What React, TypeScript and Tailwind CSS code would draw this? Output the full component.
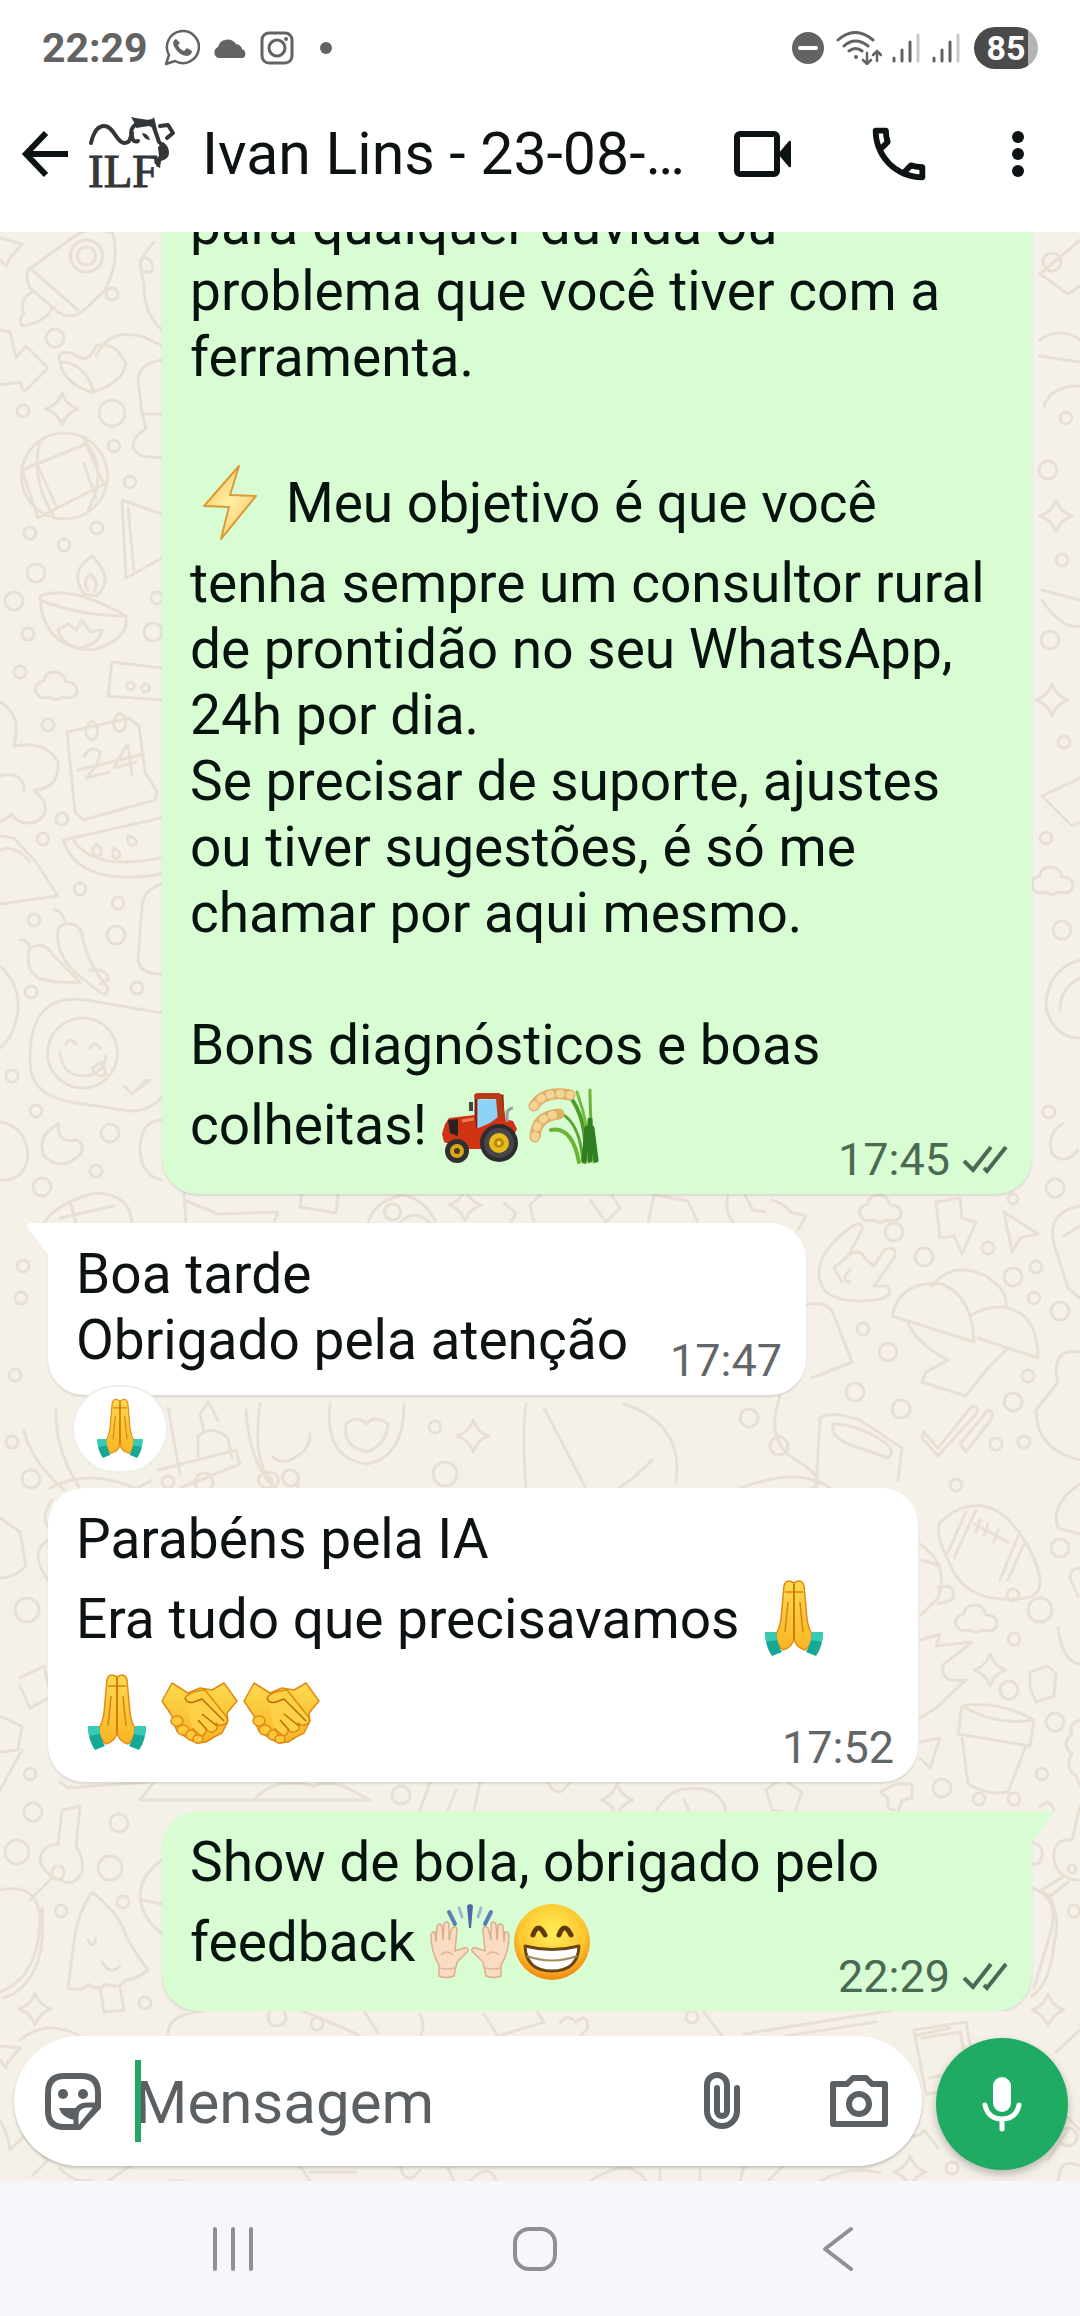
import React from 'react';
import { MdOutlinePhone } from 'react-icons/md';

type EmojiName = 'bolt' | 'tractor' | 'rice' | 'pray' | 'shake' | 'raise' | 'grin';

interface Message {
  id: number;
  mine: boolean;
  tail: boolean;
  time: string;
  // an emoji is written as :name: inside the text
  paragraphs: string[];
  reaction?: EmojiName;
}

const MESSAGES: Message[] = [
  {
    id: 1,
    mine: true,
    tail: false,
    time: '17:45',
    paragraphs: [
      'para qualquer dúvida ou problema que você tiver com a ferramenta.',
      '',
      ':bolt: Meu objetivo é que você tenha sempre um consultor rural de prontidão no seu WhatsApp, 24h por dia.',
      'Se precisar de suporte, ajustes ou tiver sugestões, é só me chamar por aqui mesmo.',
      '',
      'Bons diagnósticos e boas colheitas! :tractor::rice:',
    ],
  },
  {
    id: 2,
    mine: false,
    tail: true,
    time: '17:47',
    paragraphs: ['Boa tarde', 'Obrigado pela atenção'],
    reaction: 'pray',
  },
  {
    id: 3,
    mine: false,
    tail: false,
    time: '17:52',
    paragraphs: ['Parabéns pela IA', 'Era tudo que precisavamos :pray::pray::shake::shake:'],
  },
  {
    id: 4,
    mine: true,
    tail: true,
    time: '22:29',
    paragraphs: ['Show de bola, obrigado pelo feedback :raise::grin:'],
  },
];

/* ---------- emoji ---------- */

const PrayHalf = () => (
  <g>
    <path d="M41 11q-8-5-10 3l-3 33c-1 8-3 12-6 17q2 10 8 14 10-3 11-12z" fill="url(#skin)" stroke="#e08a12" strokeWidth="1.5" />
    <path d="M32 20h9M35 30c-1 12-2 20-3 30" stroke="#d9820f" strokeWidth="1.5" fill="none" />
    <path d="M12 60h11q1 12 6 20l-10 4q-7-10-7-24z" fill="#16a895" />
    <path d="M12 60h11l1 8-11 2z" fill="#35cbb5" />
  </g>
);

const EmojiArt: Record<EmojiName, React.ReactNode> = {
  bolt: (
    <path d="M49 10L14 50l25 1-8 32 35-43-26-1z" fill="url(#boltFill)" stroke="#dd9a33" strokeWidth="2" strokeLinejoin="round" />
  ),
  tractor: (
    <g>
      <path d="M36 20l26-2 2 40H36z" fill="#d8f0ff" stroke="#7a2412" strokeWidth="3" />
      <path d="M38 22l20-1v29l-20 8z" fill="#8fd2f7" />
      <path d="M34 17q1-2 4-2h20q3 0 4 3l4 26-8-2-2-21H35z" fill="#b93a17" />
      <path d="M5 46l4-6 26-3 1 14 14-6 8-6 15 4 4 8-4 8-30 12H22L4 64l-2-8z" fill="#cf3314" />
      <path d="M8 42l10-1v17l-8-3z" fill="#2b2320" />
      <path d="M22 43l12-2" stroke="#f07a4f" strokeWidth="3" />
      <path d="M67 44V36q0-5 6-6" stroke="#9aa0a4" strokeWidth="3" fill="none" />
      <path d="M31 24v9" stroke="#444" strokeWidth="4" />
      <circle cx="59" cy="65" r="19" fill="#2d2d30" />
      <circle cx="59" cy="65" r="15" fill="#45454a" />
      <circle cx="59" cy="65" r="10" fill="#e8bb1c" />
      <circle cx="59" cy="65" r="5" fill="#b98a0c" />
      <circle cx="59" cy="65" r="2" fill="#f6dc62" />
      <circle cx="17" cy="73" r="12" fill="#303033" />
      <circle cx="17" cy="73" r="7" fill="#d9a81c" />
      <circle cx="17" cy="73" r="3" fill="#4a3a10" />
    </g>
  ),
  rice: (
    <g fill="none" strokeLinecap="round">
      <path d="M72 84Q68 40 68 12" stroke="#6cb335" strokeWidth="3" />
      <path d="M63 84Q66 40 46 16" stroke="#4f9c2c" strokeWidth="4" />
      <path d="M67 84Q68 50 55 14" stroke="#79bb3c" strokeWidth="3" />
      <path d="M61 84Q58 46 40 36" stroke="#5aa630" strokeWidth="3" />
      <path d="M57 84Q50 48 29 52" stroke="#6cb335" strokeWidth="4" />
      <path d="M62 82L65 50M68 82L68 42M74 82L70 50" stroke="#2f7f22" strokeWidth="5" />
      <path d="M12 28Q22 12 48 17" stroke="#e0b067" strokeWidth="11" />
      <path d="M12 28Q22 12 48 17" stroke="#f4d496" strokeWidth="8" strokeDasharray="1 9" />
      <path d="M13 59Q14 38 37 36" stroke="#e0b067" strokeWidth="11" />
      <path d="M13 59Q14 38 37 36" stroke="#f4d496" strokeWidth="8" strokeDasharray="1 9" />
    </g>
  ),
  pray: (
    <g>
      <PrayHalf />
      <g transform="translate(82 0) scale(-1 1)">
        <PrayHalf />
      </g>
      <path d="M41 12v55" stroke="#c9750b" strokeWidth="1.5" />
    </g>
  ),
  shake: (
    <g stroke="#e08a12" strokeWidth="1.5" strokeLinejoin="round">
      <path d="M14 17l16 10 12-5 12 2 12-7 13 18-10 12 1 8-3 6-3 6-8 4-8 5-9 1-10-5-10-7-4-9-1-6-10-15z" fill="url(#skin)" />
      <path d="M27 32q3-5 12-7l8-1 20 25q5 6 0 9t-9-1q3 5-1 8t-9-1q0 5-5 6l-9-8" fill="#fdd045" />
      <path d="M27 32q2 6 9 4l8-3 22 22M44 48l15 12M40 54l9 10" fill="none" stroke="#b96a0a" />
      <g fill="#fdc93c">
        <ellipse cx="19" cy="55" rx="6" ry="5" />
        <ellipse cx="25" cy="64" rx="6" ry="5" />
        <ellipse cx="33" cy="69" rx="5" ry="5" />
        <ellipse cx="40" cy="73" rx="5" ry="4" />
      </g>
    </g>
  ),
  raise: (
    <g>
      {[0, 1].map((side) => (
        <g key={side} transform={side ? 'translate(82 0) scale(-1 1)' : undefined}>
          <path
            d="M10 81V70C5 62 2 52 2 40q1-4 4-3l1 10 1-16q3-4 5 0l1 14 1-16q3-4 5 0l0 16 3-12q4-3 5 1l-2 22 9-3q5-1 4 3L28 67l-3 14q-8 3-15 0z"
            fill="#f9dcc3"
            stroke="#dcae8e"
            strokeWidth="1.5"
          />
          <path d="M10 73q8 2 16 0M12 60q6-6 12 0" stroke="#e3b595" strokeWidth="1.5" fill="none" />
          <path d="M20 17l6 12" stroke="#5c7fb8" strokeWidth="4" strokeLinecap="round" />
          <path d="M30 13l3 9" stroke="#9db7d2" strokeWidth="3" strokeLinecap="round" />
        </g>
      ))}
      <path d="M38 11q3-4 6 0l-2 22h-2z" fill="#4a69a8" />
    </g>
  ),
  grin: (
    <g>
      <circle cx="41" cy="47" r="38" fill="url(#face)" />
      <path d="M22 40q5-14 12 0M48 40q5-14 12 0" fill="none" stroke="#5d3a0c" strokeWidth="5" strokeLinecap="round" />
      <path d="M14 51q27 7 54 0-1 25-27 25-26 0-27-25z" fill="#fff" stroke="#6b4512" strokeWidth="3" strokeLinejoin="round" />
      <path d="M16 61q25 9 50 0" stroke="#a88a5c" strokeWidth="2" fill="none" />
    </g>
  ),
};

const EMOJI_LABEL: Record<EmojiName, string> = {
  bolt: '⚡',
  tractor: '🚜',
  rice: '🌾',
  pray: '🙏',
  shake: '🤝',
  raise: '🙌🏻',
  grin: '😁',
};

const Emoji = ({ name, className }: { name: EmojiName; className: string }) => (
  <svg viewBox="0 0 82 94" role="img" aria-label={EMOJI_LABEL[name]} className={className}>
    {EmojiArt[name]}
  </svg>
);

const EmojiDefs = () => (
  <svg width="0" height="0" className="absolute" aria-hidden="true">
    <defs>
      <linearGradient id="skin" x1="0" y1="0" x2="0" y2="1">
        <stop offset="0" stopColor="#ffd94f" />
        <stop offset="1" stopColor="#f9b524" />
      </linearGradient>
      <linearGradient id="boltFill" x1="0" y1="0" x2="1" y2="1">
        <stop offset="0" stopColor="#f9b74c" />
        <stop offset=".5" stopColor="#fff0a6" />
        <stop offset="1" stopColor="#f9b74c" />
      </linearGradient>
      <radialGradient id="face" cx=".5" cy=".38" r=".62">
        <stop offset="0" stopColor="#ffee58" />
        <stop offset=".7" stopColor="#fdc62f" />
        <stop offset="1" stopColor="#f0860f" />
      </radialGradient>
    </defs>
  </svg>
);

/* ---------- wallpaper ---------- */

const DOTS = [
  [112, 294, 6], [55, 338, 9], [23, 411, 6], [112, 413, 13], [114, 446, 6], [130, 482, 6], [30, 533, 6], [97, 528, 6],
  [64, 545, 6], [36, 573, 9], [14, 601, 9], [157, 598, 6], [28, 634, 6], [153, 632, 9], [20, 672, 6], [48, 725, 6],
  [62, 819, 6], [43, 839, 6], [80, 889, 6], [118, 903, 6], [34, 920, 6], [116, 935, 9], [31, 992, 6], [137, 988, 6],
  [12, 1076, 6], [36, 1111, 6], [110, 1133, 9], [96, 1171, 6], [42, 1187, 9], [1049, 1112, 6], [1055, 1188, 9],
  [1013, 1199, 5], [894, 1232, 9], [988, 1248, 6], [924, 1257, 9], [1036, 1267, 6], [1013, 1277, 9], [1034, 1298, 6],
  [1060, 1311, 9], [863, 1329, 6], [888, 1352, 9], [1028, 1376, 6], [855, 1392, 9], [901, 1409, 9], [1013, 1402, 9],
  [749, 1418, 9], [779, 1446, 9], [996, 1444, 6], [1024, 1442, 6], [1060, 1548, 9], [1013, 1595, 6], [1040, 1610, 12],
  [1014, 1639, 6], [1009, 1690, 9], [1055, 1722, 9], [1042, 1774, 6], [942, 1788, 9], [979, 1799, 6], [1014, 1799, 6],
  [956, 1485, 6], [23, 1266, 6], [21, 1298, 6], [15, 1375, 6], [12, 1442, 6], [31, 1479, 9], [27, 1610, 12],
  [30, 1774, 6], [33, 1812, 9], [435, 1427, 6], [445, 1474, 12], [204, 1482, 9], [168, 1482, 6], [119, 1823, 9],
  [17, 1852, 12], [110, 1868, 12], [123, 1902, 6], [61, 1911, 6], [145, 2003, 6], [277, 2017, 9], [317, 2024, 6],
  [401, 1795, 9], [692, 2017, 6], [1068, 2137, 9], [952, 2168, 6], [1052, 262, 9], [1066, 418, 6], [1048, 470, 9],
  [1062, 560, 6], [1050, 640, 9], [1064, 742, 6], [1046, 838, 6], [1062, 930, 9], [1072, 1869, 4], [1074, 1911, 6],
];

// four pointed sparkles: x, y
const SPARKLES = [
  [62, 409], [473, 1436], [465, 1205], [990, 1670], [617, 1800], [35, 2009], [1048, 2010], [1056, 516], [1052, 700],
  [910, 2172],
];

const CLOUDS = [
  [56, 685], [976, 1618], [1052, 880], [880, 1208],
];

const DOODLES = [
  // rocket
  'M28 270L75 236Q95 224 113 234Q120 262 105 290L82 312Q70 320 58 312L30 288Q25 278 28 270zM32 270L78 310M86 240a16 16 0 1 0 1 0M86 247a9 9 0 1 0 1 0M32 292q-14 8-8 22-6 4-2 12 24-4 30-18',
  // corner star
  'M0 238l22 6-12 14-4 8-6-6',
  // arrow
  'M0 330l10 2 6 26 10-12 22 22-24 24-4-10-20 3',
  // ice cream cone and hand
  'M96 356q14-30 50-18l16 8M60 362q-4-14 14-8 14 12 22-8 18-6 30 18-4 20-34 28-28-8-32-30zM60 362q24 0 34 30M138 380q0-16 24-20M138 380l4 34 20 0M142 414l4 14q-24 18-4 28l20 2',
  'M154 242q-8 8-14 22l4 22q0 28 18 44M140 260q8-6 12 4t-8 8',
  // globe
  'M64 433a43 43 0 1 0 1 0zM22 470l64-26 18 40-66 34zM38 466l18 40M84 464l12 34M40 440q-10 40 14 76M84 440q26 30 4 70',
  // playing card
  'M122 500l40 14M122 500l4 78 36-20M128 508l6 62',
  // oil lamp
  'M40 596q30-12 86 20 4 24-34 34-50-2-52-54zM40 600q40 16 86 16M84 594q-16-22 8-38 24 24 4 40zM88 590q-6-8 2-16 10 8 4 18M58 630l10-6 8 6 6-10 8 12 12-2q-4 16-24 18-16-4-20-18z',
  // radio
  'M112 662l50 6M112 662l-4 34 54 4M130 682a4 4 0 1 0 1 0M145 684a4 4 0 1 0 1 0',
  // calendar
  'M67 732l62-14 10 8 6 46 12 20-2 8-72 20-8-8zM78 770l66-16M86 728a6 9 0 1 0 4-6zM114 720a6 9 0 1 0 4-6z',
  'M84 756q8-12 16-4 0 12-14 26l24-6M126 746l-12 22 22-6M128 744l4 30',
  // tree blob
  'M0 702q22 12 14 44 32-6 44 16 2 26-24 28 22 20 2 32-18 4-24-8-10 8-14 8M0 776q24-6 24 16',
  'M0 836l14 2 22 24 22 34-58 8M0 850q16-6 30 12',
  // watermelon
  'M63 840l98-22M63 840q16 48 98 34M72 838q20 34 88 20M96 844q-8 10 2 12 8-4-2-12zM114 848q-4 12 4 10 6-4-4-10zM128 836q-2 12 8 8 2-6-8-8z',
  // chillies
  'M54 910q8 0 12 14 12-2 16 10 4 28 26 54 0 14-18-4Q54 960 58 930q2-6 10-6M20 940q8 0 10 8 14-8 24 8l26 26M30 948q-6 20 8 30 18 6 42 4M90 970q18-2 18 10l-8 4',
  // smiley bubble
  'M162 1013L86 1000q-56-8-56 58-2 36 40 44l60 9q20 0 32-14M82 1018a35 35 0 1 0 1 0M60 1052q2 24 24 24 20-2 22-20M66 1044q4-8 10 0M90 1048q4-8 10 0M92 1068l10-6 4 12q-8 6-14-6zM124 1086l8 8 14-14M134 1092l16-12',
  // rounded box behind bubble
  'M162 884q-20 6-20 24l-4 50q0 16 24 16M162 1120q-20 0-22 26 0 30 22 34M0 966q20 18 18 44-4 28-18 38M0 1122q26 4 28 34-4 26-28 24',
  // moon
  'M58 1124q-22 12-14 32 20 18 38-4 2-10-6-12-18 4-18-16z',
  // strip between the first two bubbles
  'M44 1223q10-18 50-30 36 0 38 30M76 1223l-6-22M60 1218l54-12M184 1193l2 30M184 1200l34 14 60-2-4 11M302 1193l-2 14 36 6 2-18M368 1223q6-22 34-28 24 4 34 28M392 1204a8 8 0 1 0 1 0M400 1223q14-16 30 0M504 1203l12 10-6 12M540 1195l-10 10 4 18M590 1200l16 22 14-14-8-12M648 1223l6-28 34 6 10 22M728 1196q-4 18 6 27M745 1196l8 14 12 2M772 1200q14 4 18 12l16 4-8 14',
  // rock hand
  'M842 1234q22-18 20-4l-14 26q12-10 18 4l8 6 10-16q14-6 10 8l-20 28 14 0q6 12-14 14-36 4-50-10-16-26 18-56zM848 1256l-14 12 8 14M850 1270q-10 10 0 12',
  // bolt and cursor
  'M936 1202l24-4 2 20 14 4-14 32-8-18-14 2zM1004 1212l34 22-18 4-8 14z',
  // umbrella trio
  'M892 1316q8-36 50-32 30 12 32 58zM932 1286q20-26 54-10 22 14 20 30M970 1316q30-18 54 0 14 14 14 42l-60-20M908 1324q12 22 40 36l-22 12-4 10 44 14 22-28 20-20',
  // right edge shapes
  'M1080 1206q-34 6-26 38l14 44 12 10M1064 1236l16-10M1080 1352q-30-4-22 30l-22 28q0 40 44 50M1080 240l-40 34 28 20 12-8M1040 340q20-14 40 0M1040 356l40 6M1080 386q-30 0-36 20M1042 590l38 10M1042 600q20 30 38 26M1080 778l-38 18 30 30 8-4M1080 960q-34 10-34 48 8 30 34 30M1080 978q-20 10-20 32M1062 1124q-16 10-10 30 14 12 26-4',
  // cup and hat
  'M802 1306q26-8 32 10l18 46-40 16M820 1418q10-8 40 2l42 28-4 32M820 1418l-4 70M834 1424q-6 10 14 20l40 14q10-8-10-20-24-14-44-14z',
  // ticks
  'M924 1432l14 16 34-42q8 0 4 8l-38 42-16-18zM960 1444l28-34q6 2 4 8l-26 34z',
  // middle strip
  'M56 1410q-2 50 40 100l56-30M24 1430q6 30 40 60M168 1408l12 66M180 1488l60-24-4-14-78 20M198 1456v-20q14-12 30 2l4 20M204 1432l-4-18 8-12 10 18M246 1410q4 60 32 80M260 1404q-8 60 12 76v34q16 10 26-4v-34M272 1456q10 10 22 2 16-8 16-24M268 1472a10 8 0 1 0 1 0M290 1470a8 8 0 1 0 1 0M222 1554q20-34 50-42M306 1500q50-4 56 60M330 1404q-6 54 36 60 38-6 38-60M346 1424q-4 22 20 28 20-6 22-28-14-10-22 0-8-10-20 0M382 1516v32h24v-32zM406 1502h14v20h-14zM526 1404q-4 30 0 84M544 1408l48 92q30-8 60-40M552 1492l6 60 40-4M624 1404q60 20 52 78M780 1396q-14 40 10 60 40 24 22 32',
  // basketball cap
  'M740 1488q60-22 90 0M50 1488q40-20 84 0M0 1518l20 14 6 34q-12 12-26 12M52 1500q-14 20 0 30M48 1540q-20 12 0 40M20 1678l24-12 4 18 4 12-22 12-10-22M0 1716l22 10-4 24-18 2M22 1750l-22 40',
  // football
  'M942 1520q50-40 88 30 22 44-4 48-60 8-76-34-18-36-8-44zM966 1512l-20 44M976 1510l-22 48M1018 1536l-18 44M1024 1544l-16 36M974 1524l34 18M980 1520l-4 12M988 1524l-4 12M998 1530l-4 12',
  // flower pot
  'M962 1706q36-6 72 14l-4 26-72-12zM962 1706q34 20 70 14M962 1738l6 46q20 12 40 8l18-46',
  // pieces right of the third bubble
  'M920 1544q30 20 18 54l-18 18M922 1560l18 6M938 1588q20-6 14 12l-14 4M920 1640l20-6-4 12 36-4-28 22q-6 20 22 16l-30 28-16 10M1030 1672l18-6 8 8-2 22-18 6-6-14zM920 1742l20-4-6 18-4 12-10-10M1080 1484q-30 20-22 44l22 6M1080 1568q-10 0-10 10l8 18M1058 1628q4 34 22 36M1080 1720q-12 4-8 14-12 10 0 20-8 14 4 22l4 10',
  // strip above the last bubble
  'M60 1782l8 6 80-6M154 1782l-14 18h230l-22-12q-20-8-34-2-40-10-60 14M430 1782l-10 28M456 1790l-8 20M480 1782l-6 28M548 1782q10 20 22 0M656 1811q14-22 30-22 34-4 40 22M684 1800l12 24M766 1790l16-12 20 14-8 22-22-4zM880 1792l16-8 16 0 0 14-10 2-4 12-10-4 0-10z',
  // key and tree
  'M62 1810l18-4-4 40q8 12 6 26-8 16-22 8-18-6-20-22 4-14 18-14zM56 1866a6 7 0 1 0 4 0M52 1878l-22 22M0 1890q36-8 40 26 0 60-40 76M4 1998q44-16 38-90',
  'M92 1892q-16 24-18 50l-6 46q16 4 20-4 10 8 18 0 14 6 20-4 10 0 22-10-16-22-22-34-6-22-34-44zM100 1988l4 24 20-2-4-22M88 1940q6 10 8-2M102 1962q8 14 18 4',
  'M162 1860q-20 14-22 34 0 22 22 40M142 1900l20 4M168 2036q-2-22 36-25M20 2040q26-22 60-4M300 2010q54 22 60 26M364 2011l14 22M420 2014q6 14 0 22M484 2014l14 22 46-14-8-12M560 2024q6-12 16-2 12-10 12 6l-8 8M722 2036l-18-24M744 2034l150-24M914 2036l36-8M786 2036l90-14',
  // key right of the last bubble
  'M1080 1806l-8 34q-20-2-18 20 4 20 26 20M1064 1876l-22 14 6 8 20-16M1032 1888q26 8 20 40l-18 60M1048 1894q14 24 6 50-4 40-22 52M1032 1842q12 4 10 14t-10 8M1040 1806q10-8 14 4',
  // picture frame by the mic button
  'M914 2030l52-8 12 66-52 6zM922 2038l38-6 8 38-38 8M920 2110a12 14 0 1 0 4 20l14 18M1080 2030l-24 22M1050 2100l30 30M1068 2130l-20 30M1080 2166q-20-10-22 15',
  // below the composer
  'M0 2046l20 2-12 14-2 6-6-8M0 2120q10 20 10 30l14-14 24 24-16 16M60 2168q14 16 30 12M108 2181l30-20M170 2181l14 0M300 2166l10 15M310 2172h46M400 2166q6 22 20 4M448 2168l6 13M470 2181q20-20 26 0M590 2181q40-26 56 0M660 2170v11M700 2170v11M740 2181l4-14M768 2181l14-14M820 2181q30-16 60-8',
];

const Wallpaper = () => (
  <svg
    viewBox="0 232 1080 1949"
    preserveAspectRatio="xMidYMin slice"
    aria-hidden="true"
    className="absolute inset-0 w-full h-full"
  >
    <g fill="none" stroke="#e8e0d5" strokeWidth="3" strokeLinecap="round" strokeLinejoin="round">
      {DOTS.map(([x, y, r]) => (
        <circle key={`${x}-${y}`} cx={x} cy={y} r={r} />
      ))}
      {SPARKLES.map(([x, y]) => (
        <path key={`${x}-${y}`} transform={`translate(${x} ${y})`} d="M0-16Q4-4 16 0Q4 4 0 16Q-4 4-16 0Q-4-4 0-16z" />
      ))}
      {CLOUDS.map(([x, y]) => (
        <path key={`${x}-${y}`} transform={`translate(${x} ${y})`} d="M-12-4q-10 2-8 11 4 8 14 5 6 5 12 0 14 3 15-6 0-9-11-9-2-10-12-10-10 1-10 9z" />
      ))}
      {DOODLES.map((d, i) => (
        <path key={i} d={d} />
      ))}
    </g>
  </svg>
);

/* ---------- header ---------- */

const SignalBars = () => (
  <svg viewBox="0 0 28 32" className="w-7 h-8" aria-hidden="true">
    <g strokeWidth="3" strokeLinecap="round" stroke="#636363">
      <path d="M2 26v3M10 18v11M18 10v19" />
      <path d="M26 3v26" stroke="#c9c9c9" />
    </g>
  </svg>
);

const StatusBar = () => (
  <div className="flex items-center justify-between h-24 pl-[42px] pr-[42px] text-[#636363]">
    <div className="flex items-center">
      <span className="text-[41px] leading-[48px] font-bold">22:29</span>
      <svg viewBox="0 0 36 38" className="w-9 h-[38px] ml-4" aria-hidden="true">
        <path d="M2 35l3-9A16 16 0 1 1 11 32z" fill="none" stroke="currentColor" strokeWidth="2.5" strokeLinejoin="round" />
        <path d="M12 10c-3 1-4 5-1 9 3 5 8 8 12 8 3 0 5-3 5-5l-5-3-3 3c-3-1-5-3-6-6l2-2z" fill="currentColor" />
      </svg>
      <svg viewBox="0 0 36 22" className="w-9 h-[22px] ml-3" aria-hidden="true">
        <path d="M6 21a6 6 0 0 1 0-11A10 10 0 0 1 24 7a7 7 0 0 1 6 5 5 5 0 0 1 1 9z" fill="currentColor" />
      </svg>
      <svg viewBox="0 0 34 34" className="w-[34px] h-[34px] ml-3" aria-hidden="true">
        <g fill="none" stroke="currentColor" strokeWidth="3">
          <rect x="2" y="2" width="30" height="30" rx="7" />
          <circle cx="17" cy="17" r="8" />
        </g>
        <circle cx="26" cy="8" r="2" fill="currentColor" />
      </svg>
      <span className="w-3 h-3 ml-[26px] rounded-full bg-[#636363]" />
    </div>
    <div className="flex items-center">
      <svg viewBox="0 0 32 32" className="w-8 h-8" aria-hidden="true">
        <circle cx="16" cy="16" r="16" fill="currentColor" />
        <path d="M8 16h16" stroke="#fff" strokeWidth="4" strokeLinecap="round" />
      </svg>
      <svg viewBox="0 0 46 34" className="w-[46px] h-[34px] ml-3" aria-hidden="true">
        <g fill="none" stroke="currentColor" strokeWidth="3" strokeLinecap="round">
          <path d="M2 9q17-15 35 0M8 15q11-10 24 0M13 20q7-5 13 0" />
          <path d="M31 22v10M27 29l4 4 4-4M41 30V20M37 24l4-4 4 4" strokeWidth="2.5" />
        </g>
        <circle cx="20" cy="26" r="2" fill="currentColor" />
      </svg>
      <span className="flex ml-2.5 gap-3">
        <SignalBars />
        <SignalBars />
      </span>
      <span className="flex items-center justify-center w-16 h-[42px] ml-3.5 rounded-full bg-linear-to-r from-[#4a4a4a] from-84% to-[#b4b4b4] to-84% text-[34px] leading-[42px] font-bold text-white">
        85
      </span>
    </div>
  </div>
);

const Avatar = () => (
  <svg viewBox="0 0 98 98" className="w-[98px] h-[98px] shrink-0" role="img" aria-label="ILF">
    <g fill="none" stroke="#33373a" strokeWidth="4" strokeLinecap="round" strokeLinejoin="round">
      <path d="M11 38q4-17 13-17c10 0 12 16 20 17 7 0 6-6 8-10" />
      <path d="M52 30q-3-5 4-11M52 30q0 8 6 6M72 17q3 8 7 20 8 6 7 12M80 21l8-1 5 8-6 5" />
    </g>
    <g fill="#33373a">
      <path d="M51 12q4 1 11 2 10 2 12-2l3 13-8-4-13 2-1-4z" />
      <path d="M62 28q6 0 8 7-6 0-8-7zM78 42q3-3 5-5 6 4 6 11 0 6-8 8l-1 7-4-2 0-7 3-3z" />
    </g>
    <text x="8" y="82" fontSize="47" fill="#33373a" stroke="#33373a" strokeWidth="1" fontFamily="'Liberation Serif', serif">
      ILF
    </text>
  </svg>
);

const ChatHeader = () => (
  <header className="flex items-center h-[136px] pb-5 pl-5 pr-[50px] text-[#0d1214]">
    <button type="button" aria-label="Voltar" className="shrink-0">
      <svg viewBox="0 0 52 52" className="w-[52px] h-[52px]">
        <path d="M26 5L6 26l20 21M6 26h42" fill="none" stroke="currentColor" strokeWidth="6" />
      </svg>
    </button>
    <button type="button" aria-label="Foto do contato" className="ml-2 shrink-0">
      <Avatar />
    </button>
    <h1 className="flex-1 min-w-0 ml-6 text-[59px] leading-[72px] whitespace-nowrap">Ivan Lins - 23-08-…</h1>
    <div className="flex items-center shrink-0">
      <button type="button" aria-label="Chamada de vídeo">
        <svg viewBox="0 0 58 48" className="w-[58px] h-12">
          <rect x="3" y="4" width="40" height="40" rx="3" fill="none" stroke="currentColor" strokeWidth="6" />
          <path d="M44 24l11-13q2-1 2 1v24q0 2-2 1z" fill="currentColor" />
        </svg>
      </button>
      <button type="button" aria-label="Ligar" className="ml-[72px]">
        <MdOutlinePhone className="w-[70px] h-[70px]" />
      </button>
      <button type="button" aria-label="Mais opções" className="ml-[72px]">
        <svg viewBox="0 0 24 52" className="w-6 h-[52px]">
          <g fill="currentColor">
            <circle cx="12" cy="9" r="6" />
            <circle cx="12" cy="26" r="6" />
            <circle cx="12" cy="43" r="6" />
          </g>
        </svg>
      </button>
    </div>
  </header>
);

/* ---------- messages ---------- */

const renderText = (text: string) =>
  text
    .split(/:([a-z]+):/)
    .map((part, i) =>
      i % 2 ? <Emoji key={i} name={part as EmojiName} className="inline-block w-[82px] h-[94px] align-[-28px]" /> : part
    );

const DoubleCheck = () => (
  <svg viewBox="0 0 46 30" className="w-[46px] h-[30px]" role="img" aria-label="Entregue">
    <path d="M2 16l9 9L29 2M22 23l3 3L44 2" fill="none" stroke="currentColor" strokeWidth="4" />
  </svg>
);

const Bubble = ({ msg }: { msg: Message }) => (
  <div className={`flex flex-col ${msg.mine ? 'items-end' : 'items-start'}`}>
    <div
      className={`relative max-w-[870px] px-7 pt-[18px] pb-[22px] rounded-[36px] shadow-[0_2px_2px_rgba(0,0,0,0.1)] text-[55px] leading-[66px] ${
        msg.mine ? 'bg-[#d9fdd3] text-[#06130f]' : 'bg-white text-[#0d1214]'
      } ${msg.tail ? (msg.mine ? 'rounded-tr-none' : 'rounded-tl-none') : ''}`}
    >
      {msg.tail && (
        <svg
          viewBox="0 0 21 36"
          aria-hidden="true"
          className={`absolute top-0 w-[21px] h-9 ${msg.mine ? 'left-full text-[#d9fdd3]' : 'right-full -scale-x-100 text-white'}`}
        >
          <path d="M0 0h18q5 1 2 5L0 31z" fill="currentColor" />
        </svg>
      )}
      {msg.paragraphs.map((p, i) => (
        <p key={i} className="min-h-[66px]">
          {renderText(p)}
          {/* keeps the last line clear of the time */}
          {i === msg.paragraphs.length - 1 && <span className={`inline-block ${msg.mine ? 'w-[200px]' : 'w-[150px]'}`} />}
        </p>
      ))}
      <div
        className={`absolute right-6 bottom-3 flex items-center gap-3 text-[45px] leading-[44px] ${
          msg.mine ? 'text-[#4a6a54]' : 'text-[#636667]'
        }`}
      >
        <time>{msg.time}</time>
        {msg.mine && <DoubleCheck />}
      </div>
    </div>
    {msg.reaction && (
      <button
        type="button"
        aria-label="Reação"
        className="relative flex items-center justify-center w-24 h-[88px] -mt-2.5 -mb-3.5 ml-6 rounded-full border-2 border-[#f0eeea] bg-white"
      >
        <Emoji name={msg.reaction} className="w-16 h-[74px]" />
      </button>
    )}
  </div>
);

/* ---------- composer ---------- */

const Composer = () => (
  <form className="relative flex items-start gap-3.5 pt-[25px] pb-[11px] pl-3.5 pr-3" onSubmit={(e) => e.preventDefault()}>
    <div className="flex items-center flex-1 min-w-0 h-[130px] pl-7 pr-8 rounded-full bg-white shadow-[0_2px_3px_rgba(0,0,0,0.2)] text-[#5b6064]">
      <button type="button" aria-label="Figurinhas" className="shrink-0">
        <svg viewBox="0 0 62 62" className="w-[62px] h-[62px]">
          <path
            d="M22 6h18q16 0 16 17v14L37 57H22Q6 57 6 41V23Q6 6 22 6z"
            fill="none"
            stroke="currentColor"
            strokeWidth="6"
            strokeLinejoin="round"
          />
          <path d="M34 57V46q0-11 12-11h10L38 57z" fill="#fff" stroke="currentColor" strokeWidth="5" strokeLinejoin="round" />
          <path d="M17 38h23q-7 5-7 12Q20 48 17 38z" fill="currentColor" />
          <circle cx="21" cy="24" r="5" fill="currentColor" />
          <circle cx="41" cy="24" r="5" fill="currentColor" />
        </svg>
      </button>
      <div className="relative flex items-center flex-1 min-w-0 ml-[31px]">
        <input
          type="text"
          aria-label="Mensagem"
          placeholder="Mensagem"
          className="w-full h-[82px] pt-1 text-[60px] bg-transparent outline-none placeholder:text-[#5b6064] placeholder:opacity-100"
        />
        <span className="absolute left-0 top-0 w-1.5 h-[82px] bg-[#26a664]" />
      </div>
      <button type="button" aria-label="Anexar" className="shrink-0">
        <svg viewBox="0 0 42 62" className="w-[42px] h-[62px]">
          <path
            d="M36 18V41a15 15 0 0 1-30 0V15a10 10 0 0 1 20 0V41a5 5 0 0 1-10 0V18"
            fill="none"
            stroke="currentColor"
            strokeWidth="6"
            strokeLinecap="round"
          />
        </svg>
      </button>
      <button type="button" aria-label="Câmera" className="ml-[85px] shrink-0">
        <svg viewBox="0 0 62 58" className="w-[62px] h-[58px]">
          <g fill="none" stroke="currentColor" strokeWidth="6" strokeLinejoin="round">
            <path d="M5 12h14l6-6h13l6 6h13v40H5z" />
            <circle cx="31" cy="32" r="10" />
          </g>
        </svg>
      </button>
    </div>
    <button
      type="button"
      aria-label="Gravar áudio"
      className="flex items-center justify-center shrink-0 w-[132px] h-[132px] mt-0.5 rounded-full bg-[#1fab61] shadow-[0_4px_8px_rgba(0,0,0,0.25)]"
    >
      <svg viewBox="0 0 42 56" className="w-[42px] h-14">
        <rect x="12" y="1" width="18" height="35" rx="9" fill="#fff" />
        <path d="M4 29q3 14 17 14t17-14M21 43v10" fill="none" stroke="#fff" strokeWidth="5" strokeLinecap="round" />
      </svg>
    </button>
  </form>
);

const NavBar = () => (
  <nav className="flex items-center justify-center gap-[254px] h-[135px] pr-2.5 bg-[#f6f7fa] shrink-0">
    <button type="button" aria-label="Recentes">
      <svg viewBox="0 0 48 48" className="w-12 h-12">
        <path d="M6 4v40M24 4v40M42 4v40" stroke="#8f9092" strokeWidth="4" strokeLinecap="round" />
      </svg>
    </button>
    <button type="button" aria-label="Início">
      <svg viewBox="0 0 48 48" className="w-12 h-12">
        <rect x="4" y="4" width="40" height="40" rx="14" fill="none" stroke="#8f9092" strokeWidth="4" />
      </svg>
    </button>
    <button type="button" aria-label="Voltar">
      <svg viewBox="0 0 48 48" className="w-12 h-12">
        <path d="M38 4L12 24l26 20" fill="none" stroke="#8f9092" strokeWidth="4" strokeLinecap="round" strokeLinejoin="round" />
      </svg>
    </button>
  </nav>
);

export default function App() {
  return (
    <div className="flex flex-col h-screen overflow-hidden bg-white font-[Roboto,sans-serif]">
      <EmojiDefs />
      <div className="shrink-0">
        <StatusBar />
        <ChatHeader />
      </div>
      <main className="relative flex flex-col flex-1 min-h-0 bg-[#f5f1e9] overflow-hidden">
        <Wallpaper />
        <div className="relative flex flex-col justify-end flex-1 min-h-0 gap-[29px] px-12 overflow-hidden">
          {MESSAGES.map((msg) => (
            <Bubble key={msg.id} msg={msg} />
          ))}
        </div>
        <Composer />
      </main>
      <NavBar />
    </div>
  );
}
